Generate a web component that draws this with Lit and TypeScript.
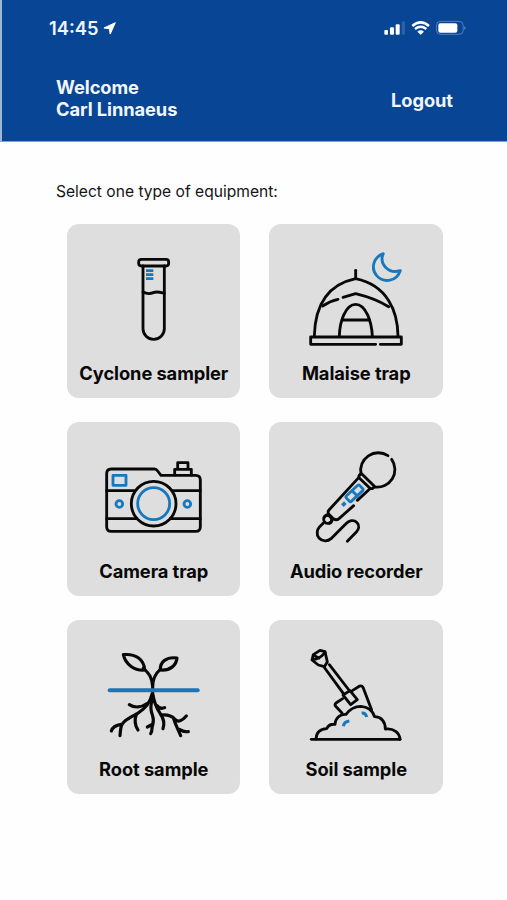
import { LitElement, html, svg, css, TemplateResult } from "lit";
import { customElement, property } from "lit/decorators.js";

const tube = svg`
  <rect x="236" y="117" width="90" height="20" rx="8"/>
  <path d="M249 137V325a32 32 0 0 0 64 0V137"/>
  <path d="M249 215C262 222 271 221 280 217C291 212 301 216 313 219"/>
  <g class="blue" stroke-width="8" stroke-linecap="butt"><path d="M258 151H280M258 163H280M258 175H280"/></g>`;

const tent = svg`
  <path d="M281 150V174"/>
  <path d="M157 347C159 272 186 195 281 175C376 195 407 272 408 347"/>
  <path d="M182 257C198 246 212 240 228 237M243 231L281 220C318 229 350 241 380 259"/>
  <path d="M232 347C233 305 250 252 281 252C312 252 329 305 331 347"/>
  <path d="M241 299H322"/>
  <path d="M341 372H146V350H418V372H355"/>
  <path class="blue" stroke-linejoin="round" d="M364 100C335 110 325 143 344 166C366 190 405 183 415 151C398 156 384 154 372 142C360 130 357 115 364 100Z"/>`;

const camera = svg`
  <path d="M154 152H283Q289 152 293 158L303 171H407Q421 171 421 185V325Q421 339 407 339H154Q140 339 140 325V166Q140 152 154 152Z"/>
  <path d="M344 170V153H394V170M353 152V133H384V152"/>
  <path d="M140 217H224M337 217H421M140 301H230M331 301H421"/>
  <circle cx="281" cy="256" r="67"/>
  <g class="blue">
    <circle cx="281" cy="256" r="48"/>
    <rect x="159" y="171" width="39" height="30"/>
    <circle cx="178" cy="257" r="10"/>
    <circle cx="382" cy="257" r="10"/>
  </g>`;

const microphone = svg`
  <path d="M378 112A53 53 0 0 0 297 167M389 123A53 53 0 0 1 338 206"/>
  <path d="M299 166L337 204Q333 213 324 210L291 178Q289 170 299 166Z"/>
  <path d="M290 178L201 275Q196 281 200 287L214 301Q223 308 231 301L275 262M323 212L286 246"/>
  <path d="M186 298Q188 291 198 289L211 302Q210 312 202 315"/>
  <circle cx="197" cy="303" r="12"/>
  <path d="M185 313L173 325C165 334 162 349 171 359C181 370 197 370 207 361L251 317C261 306 275 303 284 312C293 321 291 333 283 341L256 369"/>
  <g class="blue">
    <rect x="250" y="214" width="55" height="22" rx="5" transform="rotate(-43 277.500 225)"/>
    <path d="M270 217L286 233"/>
    <path d="M241 262L250 253" stroke-width="11" stroke-linecap="butt"/>
  </g>`;

const plant = svg`
  <g stroke-width="9.500">
    <path d="M190 118C226 114 252 132 254 164C224 167 197 148 190 118Z"/>
    <path d="M351 128C319 124 300 139 301 164C330 167 349 150 351 128Z"/>
    <path d="M250 158C268 176 277 188 278 214M301 162C287 174 278 190 278 214V240"/>
    <path d="M276 236C271 262 257 279 233 294C204 310 191 315 184 332C181 342 181 351 180 361M154 347C158 333 169 329 184 327"/>
    <path d="M208 268C224 279 245 276 260 265M229 297C223 315 224 330 234 344"/>
    <path d="M278 240C270 278 272 286 278 302C284 319 277 329 276 339Q276 349 272 355M262 335L275 328"/>
    <path d="M279 240C283 261 288 275 299 292C314 315 313 325 309 340M290 270Q300 283 314 277"/>
    <path d="M304 299C326 297 335 301 344 311C353 323 367 316 379 302M340 307C347 330 354 342 362 361M358 342C367 348 375 350 385 349"/>
    <path d="M278 236L272 264L279 258L286 264Z" fill="#080808" stroke-width="5"/>
  </g>
  <path d="M149 225H413" stroke-width="12" stroke="#1b75b8"/>`;

const shovel = svg`
  <path d="M148 372H414"/>
  <path d="M162 371C163 353 174 341 194 340C198 331 207 326 219 327C220 309 233 296 252 297C264 281 278 273 296 273C318 274 332 287 338 304C357 304 370 318 370 341C395 338 413 352 414 372"/>
  <path d="M150 134L154 118L174 105L189 109L196 140L187 154L169 149Z"/>
  <path d="M152 133Q171 133 189 112M157 121L171 128"/>
  <path d="M186 155L246 237M202 148L263 227"/>
  <path d="M243 239L264 226L286 253L266 268Z"/>
  <path d="M242 250L222 263Q217 268 221 273L240 293M271 226L293 212Q300 210 303 216L329 284"/>
  <path class="blue" d="M244 333Q246 319 262 317M299 293Q311 292 314 305" stroke-width="9" stroke-linecap="butt"/>`;

interface Equipment {
  name: string;
  icon: TemplateResult<2>;
  box: string;
}

const equipment: Equipment[] = [
  { name: "Cyclone sampler", icon: tube, box: "129 83 300 300" },
  { name: "Malaise trap", icon: tent, box: "132 83 300 300" },
  { name: "Camera trap", icon: camera, box: "129 83 300 300" },
  { name: "Audio recorder", icon: microphone, box: "132 83 300 300" },
  { name: "Root sample", icon: plant, box: "129 86 300 300" },
  { name: "Soil sample", icon: shovel, box: "132 86 300 300" },
];

@customElement("equipment-card")
export class EquipmentCard extends LitElement {
  @property({ attribute: false }) item!: Equipment;

  static styles = css`
    :host {
      display: flex;
      flex-direction: column;
      align-items: center;
      box-sizing: border-box;
      height: 173.5px;
      padding-top: 23.5px;
      border-radius: 12px;
      background: #dedede;
    }
    .icon {
      width: 100px;
      height: 100px;
      fill: none;
      stroke: #080808;
      stroke-width: 8.5;
      stroke-linecap: round;
      stroke-linejoin: round;
      overflow: visible;
    }
    .blue {
      stroke: #1878be;
    }
    .name {
      margin-top: 13px;
      padding-left: 1px;
      font-size: 18.3px;
      font-weight: 700;
      letter-spacing: -0.08px;
      line-height: 24px;
      white-space: nowrap;
      color: #080808;
    }
  `;

  render() {
    return html`
      <svg class="icon" viewBox=${this.item.box}>${this.item.icon}</svg>
      <div class="name">${this.item.name}</div>
    `;
  }
}

@customElement("app-root")
export class AppRoot extends LitElement {
  static styles = css`
    :host {
      display: block;
      box-sizing: border-box;
      height: 900px;
      background: #fefefe;
      font-family: Inter, "Liberation Sans", sans-serif;
    }
    .header {
      box-sizing: border-box;
      height: 142px;
      border-left: 2px solid #9db6d9;
      border-bottom: 1px solid #7f9fcb;
      background: #084594;
      color: #f1f6fd;
    }
    .status {
      display: flex;
      justify-content: space-between;
      align-items: center;
      height: 20px;
      padding: 18px 38px 0 47px;
    }
    .clock {
      display: flex;
      align-items: center;
      gap: 5px;
      font-size: 18.3px;
      font-weight: 600;
      line-height: 20px;
    }
    .arrow {
      width: 13px;
      height: 13px;
      fill: #fff;
      stroke: #fff;
      stroke-width: 1;
      stroke-linejoin: round;
    }
    .indicators {
      width: 86.667px;
      height: 20px;
      fill: #fff;
    }
    .account {
      display: flex;
      justify-content: space-between;
      align-items: center;
      padding: 37.5px 54px 0 54px;
      font-size: 18.3px;
      font-weight: 700;
      letter-spacing: -0.08px;
      line-height: 22px;
    }
    .logout {
      padding-top: 4px;
    }
    .prompt {
      padding: 40px 0 0 56px;
      font-size: 15.6px;
      line-height: 20px;
      color: #151515;
    }
    .grid {
      display: grid;
      grid-template-columns: 173.5px 173.5px;
      gap: 24.5px 29px;
      padding: 22.3px 0 0 66.5px;
    }
  `;

  render() {
    return html`
      <header class="header">
        <div class="status">
          <div class="clock">
            14:45
            <svg class="arrow" viewBox="0 0 13 13">
              <path d="M12.300 .7L.9 6L6.300 6.700L7.200 12.100Z" />
            </svg>
          </div>
          <svg class="indicators" viewBox="385 55 260 60">
            <rect x="392" y="91" width="11" height="14" rx="3" />
            <rect x="409" y="83" width="12" height="22" rx="3" />
            <rect x="426" y="74" width="12" height="31" rx="3" />
            <rect x="444" y="65" width="10" height="40" rx="3" opacity=".15" />
            <g fill="none" stroke="#fff" stroke-width="7.500">
              <path d="M476 79Q501 57 526 79" />
              <path d="M484 88Q501 75 518 88" />
            </g>
            <path d="M491 96Q501 88 511 96L501 105Z" />
            <rect x="548.500" y="65" width="80" height="39" rx="12" fill="none" stroke="#fff" stroke-width="3" opacity=".3" />
            <rect x="554" y="71" width="57" height="28" rx="6" />
            <path d="M632 79Q639 85 632 91Z" opacity=".4" />
          </svg>
        </div>
        <div class="account">
          <div>Welcome<br />Carl Linnaeus</div>
          <div class="logout">Logout</div>
        </div>
      </header>
      <div class="prompt">Select one type of equipment:</div>
      <main class="grid">
        ${equipment.map((item) => html`<equipment-card .item=${item}></equipment-card>`)}
      </main>
    `;
  }
}
